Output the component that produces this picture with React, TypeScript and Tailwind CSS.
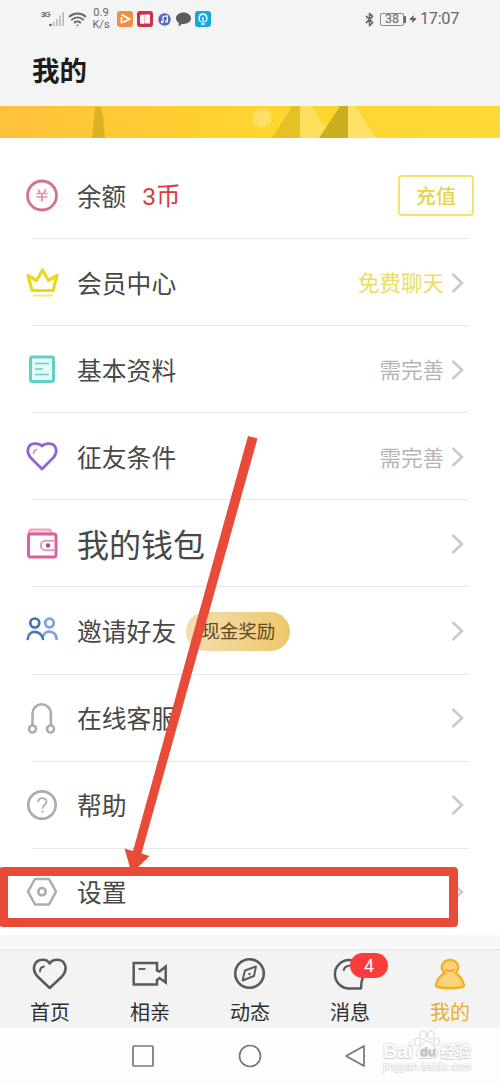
import React from 'react';
import { Bluetooth, Wifi, Zap } from 'lucide-react';

type Row = {
  label: string;
  icon: React.ReactNode;
  big?: boolean;
  hint?: string;
  hintClass?: string;
};

const CoinIcon = () => (
  <svg width="34" height="34" viewBox="0 0 34 34" fill="none" stroke="#d5708f">
    <circle cx="17" cy="16.500" r="14.500" strokeWidth="2.800" />
    <path d="M13 10.500l2 3.200M21 10.500l-2 3.200M11.500 14.500h11M11.500 18h11M17 14.500v8" stroke="#e88aa9" strokeWidth="1.700" />
  </svg>
);

const CrownIcon = () => (
  <svg width="34" height="34" viewBox="0 0 34 34" fill="none" stroke="#ecd91f" strokeLinejoin="round" strokeLinecap="round">
    <path d="M7 24.500L3 9.500L11.500 14.500L17.500 4L23.500 14.500L32 9.500L28 24.500Z" strokeWidth="3.200" />
    <path d="M8.500 29.500h19" strokeWidth="2" stroke="#f6ea73" />
  </svg>
);

const ProfileIcon = () => (
  <svg width="34" height="34" viewBox="0 0 34 34" fill="none" stroke="#66cfc4">
    <rect x="5.500" y="4" width="23" height="24.500" rx="1.500" fill="#e4faf7" strokeWidth="3" />
    <path d="M10 10.500h14M10 16h8M10 21.500h14" strokeWidth="1.700" />
  </svg>
);

const HeartIcon = () => (
  <svg width="34" height="34" viewBox="0 0 34 34" fill="none" stroke="#9363d2" strokeLinejoin="round" strokeLinecap="round">
    <path d="M17 29L5.500 17.500C0.500 11.500 3 4 9.500 3.700C13 3.500 15.500 4.500 17 6C18.500 4.500 21 3.500 24.500 3.700C31 4 33.500 11.500 28.500 17.500Z" strokeWidth="2.800" />
    <path d="M8.500 13.500c0-2.200 1.200-3.500 3.200-4" stroke="#a9a3c4" strokeWidth="1.600" />
  </svg>
);

const WalletIcon = () => (
  <svg width="34" height="34" viewBox="0 0 34 34" fill="none" stroke="#dc5f9b" strokeLinejoin="round">
    <path d="M4 8V5Q4 2.500 6.500 2.500H23Q26 2.500 27 7" stroke="#ee9ec4" fill="#f9d3e4" strokeWidth="2" />
    <rect x="3.500" y="7" width="27.500" height="23" rx="2" strokeWidth="2.900" />
    <path d="M30.500 13.800H20.500a4.700 4.700 0 0 0 0 9.500H30.500" stroke="#e897be" strokeWidth="2" />
    <circle cx="23" cy="18.500" r="2.200" fill="#b24985" stroke="none" />
  </svg>
);

const FriendsIcon = () => (
  <svg width="34" height="34" viewBox="0 0 34 34" fill="none" strokeWidth="2.700" strokeLinecap="round">
    <circle cx="24.500" cy="9" r="4.300" stroke="#79a2da" />
    <path d="M18 22.500c1.500-6.500 13-7 13.500 2.500" stroke="#79a2da" />
    <circle cx="9.800" cy="9" r="4.500" stroke="#3d74b8" />
    <path d="M2.700 25c.7-9.500 13-9.500 15.300 0" stroke="#4279bf" />
  </svg>
);

const HeadsetIcon = () => (
  <svg width="34" height="34" viewBox="0 0 34 34" fill="none" stroke="#adadad" strokeWidth="2.600">
    <path d="M7.500 25V12.500a9.200 9.200 0 0 1 18.400 0V25" />
    <circle cx="7.500" cy="28" r="3.500" fill="#fff" />
    <circle cx="25.500" cy="28" r="3.500" fill="#fff" />
  </svg>
);

const HelpIcon = () => (
  <svg width="34" height="34" viewBox="0 0 34 34" fill="none" stroke="#adadad">
    <circle cx="17" cy="17" r="13.700" strokeWidth="2.700" />
    <path d="M13.200 14c0-5.400 8.300-5 8.300-.3c0 3.200-4 3.300-4 7" strokeWidth="1.800" />
    <path d="M17.500 22.600v2" strokeWidth="2" />
  </svg>
);

const SettingsIcon = () => (
  <svg width="34" height="34" viewBox="0 0 34 34" fill="none" stroke="#adadad">
    <path d="M10 4H24L31 16.700L24 29.500H10L3 16.700Z" strokeWidth="2.500" strokeLinejoin="round" />
    <circle cx="17" cy="16.700" r="3.700" strokeWidth="2.600" />
  </svg>
);

const Chevron = () => (
  <svg className="ml-[7px]" width="13" height="20" viewBox="0 0 13 20" fill="none" stroke="#cacaca" strokeWidth="2.600">
    <path d="M1.500 1L11 10L1.500 19" />
  </svg>
);

const rows: Row[] = [
  { label: '会员中心', icon: <CrownIcon />, hint: '免费聊天', hintClass: 'text-[#eddc64]' },
  { label: '基本资料', icon: <ProfileIcon />, hint: '需完善', hintClass: 'text-[#b5b5b5]' },
  { label: '征友条件', icon: <HeartIcon />, hint: '需完善', hintClass: 'text-[#b5b5b5]' },
  { label: '我的钱包', icon: <WalletIcon />, big: true },
  { label: '邀请好友', icon: <FriendsIcon /> },
  { label: '在线客服', icon: <HeadsetIcon /> },
  { label: '帮助', icon: <HelpIcon /> },
  { label: '设置', icon: <SettingsIcon /> },
];

function StatusBar() {
  return (
    <div className="flex h-[38px] items-center justify-between pl-[41px] pr-[41px] font-['Roboto',sans-serif] text-[#666]">
      <div className="flex items-center">
        <span className="mb-2 w-2 font-['Liberation_Sans',sans-serif] text-[8px] leading-none font-bold tracking-[-1px]">3G</span>
        <svg width="16" height="16" viewBox="0 0 16 16" fill="#bbb">
          <circle cx="1.500" cy="14" r="1.300" fill="#555" />
          <path d="M4 11h1.700v4H4zM7 8h1.700v7H7zM10 4.500h1.700V15H10zM13.300 1H15v14h-1.700z" />
        </svg>
        <Wifi className="ml-[3px] h-[20px] w-[19px]" strokeWidth={2.4} />
        <div className="ml-[5px] w-[18px] text-center text-[11px] leading-[12.500px]">
          <div>0.9</div>
          <div>K/s</div>
        </div>
        <svg className="ml-[7px]" width="16" height="16" viewBox="0 0 16 16">
          <rect width="16" height="16" rx="3" fill="#ea9147" />
          <path d="M4.500 12.500V6M4.500 3.500L12.500 8L6 11.500" fill="none" stroke="#fff" strokeWidth="1.700" />
        </svg>
        <svg className="ml-1" width="16" height="16" viewBox="0 0 16 16">
          <rect width="16" height="16" rx="3" fill="#c7324d" />
          <path d="M3 4l4-.5V13L3 12.500zM7.300 3.500H13v9H7.300z" fill="#fff4f4" />
        </svg>
        <svg className="ml-[5px]" width="13" height="13" viewBox="0 0 13 13">
          <circle cx="6.500" cy="6.500" r="6.200" fill="#526bc5" />
          <path d="M5 9V3.500L9.300 3V8.500" fill="none" stroke="#fff" strokeWidth="1.200" />
          <circle cx="4.200" cy="9" r="1.300" fill="#fff" />
          <circle cx="8.500" cy="8.500" r="1.300" fill="#fff" />
        </svg>
        <svg className="ml-[5px]" width="15" height="15" viewBox="0 0 15 15" fill="#5c5c5c">
          <path d="M7.500.5C11.800.5 15 3 15 6.300S11.800 12 7.500 12c-.5 0-1 0-1.500-.1L2.700 14.500l.2-3.500C1.100 10 0 8.300 0 6.300C0 3 3.200.5 7.500.5z" />
        </svg>
        <svg className="ml-[4px]" width="16" height="16" viewBox="0 0 16 16" fill="none" stroke="#fff" strokeWidth="1.300">
          <rect width="16" height="16" rx="3" fill="#16a9dc" stroke="none" />
          <path d="M6.300 11.200C2.500 8.500 4 3 8 3s5.500 5.500 1.700 8.200M8 6v5.500M6.300 13h3.400" />
        </svg>
      </div>
      <div className="flex items-center">
        <Bluetooth className="h-[17px] w-[15px]" strokeWidth={2.4} />
        <div className="ml-[3px] flex h-[13px] w-[24px] items-center justify-center rounded-[2px] border border-[#888] text-[12.500px] leading-none">38</div>
        <div className="h-[7px] w-[2px] bg-[#666]" />
        <Zap className="ml-[3px] h-[12px] w-[8px]" fill="#555" strokeWidth={2} />
        <span className="ml-[3px] w-[39px] text-[16.300px] leading-none tracking-[-0.300px]">17:07</span>
      </div>
    </div>
  );
}

function Banner() {
  return (
    <svg className="block h-8 w-full shrink-0" viewBox="0 0 500 32">
      <defs>
        <linearGradient id="banner">
          <stop offset="0" stopColor="#ffc13c" />
          <stop offset=".5" stopColor="#ffd42f" />
          <stop offset="1" stopColor="#ffd935" />
        </linearGradient>
      </defs>
      <rect width="500" height="32" fill="url(#banner)" />
      <path d="M95 1h6l2 9 2 22H92l2-20z" fill="#d9b326" />
      <circle cx="262" cy="12" r="9.500" fill="#ffe066" />
      <path d="M292 0h8v32h-28z" fill="#e5c127" />
      <path d="M300 0h12l9 16 7 6-9 10h-19z" fill="#ffdf5f" />
      <path d="M340 0h8v32h-29z" fill="#cbaf20" />
      <path d="M348 0h7l21 32h-28z" fill="#ffe068" />
    </svg>
  );
}

function MenuRow({ label, icon, big, hint, hintClass }: Row) {
  return (
    <div className="flex h-[87.100px] items-center pr-[36px] pl-[25px]">
      {icon}
      <span className={`ml-[18px] pb-px leading-none text-[#484848] ${big ? 'text-[32px]' : 'text-[24.800px]'}`}>{label}</span>
      {label === '邀请好友' && (
        <span className="ml-[10px] flex h-[39px] w-[104px] items-center justify-center rounded-full bg-linear-to-r from-[#f5deb0] to-[#edc769] pb-px text-[18.500px] leading-none text-[#5f4820]">
          现金奖励
        </span>
      )}
      <div className="ml-auto flex items-center">
        {hint && <span className={`pb-px text-[21.500px] leading-none ${hintClass}`}>{hint}</span>}
        <Chevron />
      </div>
    </div>
  );
}

const Divider = () => <div className="mr-[31px] -mt-px ml-8 h-px bg-[#e8e8e8]" />;

function Tab({ label, active, children }: { label: string; active?: boolean; children: React.ReactNode }) {
  return (
    <div className="flex w-[100px] flex-col items-center pt-[6px]">
      <div className="relative h-[38px]">{children}</div>
      <span className={`mt-[8px] text-[20px] leading-none ${active ? 'text-[#e9ae2d]' : 'text-[#2e2e2e]'}`}>{label}</span>
    </div>
  );
}

function TabBar() {
  return (
    <div className="flex h-[79px] shrink-0 border-t border-[#e6e6e6] bg-[#f3f3f3]">
      <Tab label="首页">
        <svg width="38" height="38" viewBox="0 0 38 38" fill="none" stroke="#5a5a5a" strokeLinejoin="round" strokeLinecap="round">
          <path d="M18.700 32L6.500 20.500C-.5 12.500 4 3.800 11.500 3.800C14.800 3.800 17.300 5 18.700 7.500C20.200 5 22.900 3.800 26.200 3.800C33.700 3.800 38 12.500 31 20.500Z" strokeWidth="2.600" />
          <path d="M9 15.500c0-2.800 1.500-4.600 4-5" strokeWidth="1.900" />
        </svg>
      </Tab>
      <Tab label="相亲">
        <svg width="38" height="38" viewBox="0 0 38 38" fill="none" stroke="#5a5a5a" strokeWidth="2.500">
          <path d="M2.700 7H26V14.500L28.500 15.500L34.700 10.500V26.500L28.500 22L26 24V28.500H2.700Z" />
          <path d="M7.500 13h7" strokeWidth="1.900" />
        </svg>
      </Tab>
      <Tab label="动态">
        <svg width="38" height="38" viewBox="0 0 38 38" fill="none" stroke="#5a5a5a">
          <circle cx="18.500" cy="17.500" r="14.300" strokeWidth="2.600" />
          <path d="M25 10.500L23 20L11.500 24.500L14 14.500Z" strokeWidth="1.900" strokeLinejoin="round" />
          <circle cx="18.500" cy="18" r="1.200" fill="#5a5a5a" stroke="none" />
        </svg>
      </Tab>
      <Tab label="消息">
        <svg width="38" height="38" viewBox="0 0 38 38" fill="none" stroke="#5a5a5a" strokeLinejoin="round">
          <path d="M30 32.500L18.500 32.500A14.300 14.300 0 1 1 32.500 18C32.500 21.500 31 24 30.500 26Z" strokeWidth="2.500" />
          <path d="M12.500 15c.5-3.500 3-5.500 7.500-5.500" strokeWidth="2" />
        </svg>
        <span className="absolute -top-[3px] left-[19px] flex h-[25px] w-[38px] items-center justify-center rounded-full bg-[#fb3c3b] font-['Roboto',sans-serif] text-[18px] text-white">4</span>
      </Tab>
      <Tab label="我的" active>
        <svg width="38" height="38" viewBox="0 0 38 38" fill="#fbd37a" stroke="#efb21d" strokeWidth="2.400" strokeLinejoin="round">
          <path d="M14 17C10.500 14.500 10 10.500 12 7.500C15.500 2.700 22.500 2.700 26 7.500C28 10.500 27.500 14.500 24.500 17C29 19.500 31.500 24 33 29Q33.200 30.500 31 31C24 32.500 14 32.500 7 31Q4.800 30.500 5 29C6 24 9 19.500 14 17Z" />
          <path d="M14.500 13.500c2 2 7 2 9 0" fill="none" stroke="#f0902c" strokeWidth="1.600" />
        </svg>
      </Tab>
    </div>
  );
}

function NavBar() {
  return (
    <div className="relative flex h-[56px] shrink-0 items-center bg-[#fdfdfd] pl-[131px]">
      <svg width="24" height="24" viewBox="0 0 24 24" fill="none" stroke="#777" strokeWidth="1.700">
        <rect x="2" y="2" width="20" height="20" rx="1" />
      </svg>
      <svg className="ml-[83px]" width="24" height="24" viewBox="0 0 24 24" fill="none" stroke="#777" strokeWidth="1.700">
        <circle cx="12" cy="12" r="10.500" />
      </svg>
      <svg className="ml-[82px]" width="24" height="24" viewBox="0 0 24 24" fill="none" stroke="#777" strokeWidth="1.700" strokeLinejoin="round">
        <path d="M20 2V22L2 12Z" />
      </svg>
      <Watermark />
    </div>
  );
}

function Watermark() {
  return (
    <div className="absolute top-[2px] left-[383px] h-[50px] w-[92px] text-white [text-shadow:0_0_2px_#bbb,0_1px_1px_#d5d5d5]">
      <div className="flex h-[30px] items-start leading-none">
        <span className="w-[31px] pt-[11px] font-['Liberation_Sans',sans-serif] text-[20px] font-bold tracking-[-0.500px]">Bai</span>
        <svg className="shrink-0" width="26" height="30" viewBox="0 0 26 30" fill="#fff" stroke="#ccc" strokeWidth=".8">
          <ellipse cx="3.500" cy="12" rx="3" ry="4" />
          <ellipse cx="9" cy="5" rx="3.200" ry="4.200" />
          <ellipse cx="17" cy="5" rx="3.200" ry="4.200" />
          <ellipse cx="22.500" cy="12" rx="3" ry="4" />
          <path d="M13 11c5 0 5 5 9 8.500s1 9-3 9H7c-4 0-7-5.500-3-9S8 11 13 11z" />
          <text x="6" y="26" fontSize="13" fontWeight="bold" fontFamily="Liberation Sans, sans-serif" fill="#c4c4c4" stroke="none">du</text>
        </svg>
        <span className="shrink-0 pt-[13px] text-[15.500px] leading-none font-bold">经验</span>
      </div>
      <div className="font-['Liberation_Sans',sans-serif] text-[11px] leading-[12px]">jingyan.baidu.com</div>
    </div>
  );
}

export default function App() {
  return (
    <div className="relative flex h-[1084px] w-[500px] flex-col overflow-hidden bg-white font-['Noto_Sans_CJK_SC',sans-serif]">
      <header className="h-[106px] shrink-0 bg-[#f4f4f4]">
        <StatusBar />
        <h1 className="pt-[17px] pl-8 text-[27.500px] leading-[28px] font-bold text-[#1c1c1c]">我的</h1>
      </header>
      <Banner />

      <main className="h-[797px] shrink-0 pt-[14px]">
        <div className="flex h-[87.100px] items-center pr-[26px] pl-[25px]">
          <CoinIcon />
          <span className="ml-[18px] text-[24.600px] leading-none text-[#484848]">余额</span>
          <span className="ml-[16px] text-[24.600px] leading-none text-[#dc3b3b]">
            <span className="font-['Roboto',sans-serif]">3</span>币
          </span>
          <button className="ml-auto h-[41px] w-[76px] rounded-[4px] border-2 border-[#f4e36a] text-[20px] leading-none font-medium text-[#e8d445]">充值</button>
        </div>
        {rows.map((row) => (
          <React.Fragment key={row.label}>
            <Divider />
            <MenuRow {...row} />
          </React.Fragment>
        ))}
      </main>
      <div className="h-[14px] shrink-0 border-b-2 border-white bg-[#f7f8f7]" />

      <TabBar />
      <NavBar />

      {/* highlight around the settings row */}
      <div className="absolute top-[867px] left-[-1px] h-[60px] w-[459px] rounded-[4px] border-[9px] border-[#e84c39]" />
      <svg className="absolute top-0 left-0" width="500" height="900" viewBox="0 0 500 900" fill="#e84c39">
        <path d="M248 436L257.500 438.500L141.500 853.500L149.500 856L134 871H131L124.500 848.500L133 851Z" />
      </svg>
    </div>
  );
}
